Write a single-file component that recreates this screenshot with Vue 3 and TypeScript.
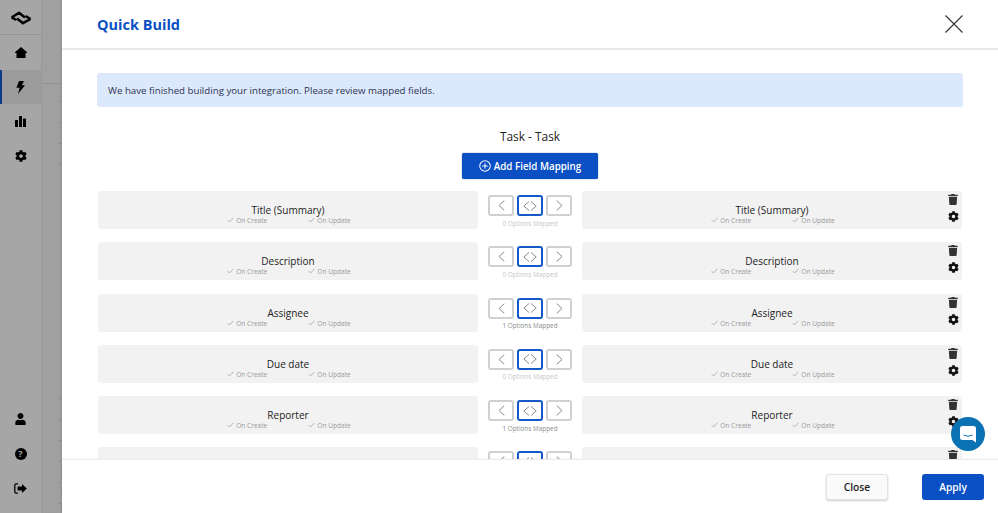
<script setup lang="ts">
const cog = 'M487.4 315.7l-42.6-24.6c4.3-23.2 4.3-47 0-70.2l42.6-24.6c4.9-2.8 7.1-8.6 5.5-14-11.1-35.6-30-67.8-54.7-94.6-3.8-4.1-10-5.1-14.8-2.3L380.8 110c-17.9-15.4-38.5-27.3-60.8-35.1V25.8c0-5.6-3.9-10.5-9.4-11.7-36.7-8.2-74.3-7.8-109.2 0-5.5 1.2-9.4 6.1-9.4 11.7V75c-22.2 7.9-42.8 19.8-60.8 35.1L88.7 85.5c-4.9-2.8-11-1.9-14.8 2.3-24.7 26.7-43.6 58.9-54.7 94.6-1.7 5.4.6 11.2 5.5 14L67.3 221c-4.3 23.2-4.3 47 0 70.2l-42.6 24.6c-4.9 2.8-7.1 8.6-5.5 14 11.1 35.6 30 67.8 54.7 94.6 3.8 4.1 10 5.1 14.8 2.3l42.6-24.6c17.9 15.4 38.5 27.3 60.8 35.1v49.2c0 5.6 3.9 10.5 9.4 11.7 36.7 8.2 74.3 7.8 109.2 0 5.5-1.2 9.4-6.1 9.4-11.7v-49.2c22.2-7.9 42.8-19.8 60.8-35.1l42.6 24.6c4.9 2.8 11 1.9 14.8-2.3 24.7-26.7 43.6-58.9 54.7-94.6 1.5-5.5-.7-11.3-5.6-14.1zM256 336c-44.1 0-80-35.9-80-80s35.9-80 80-80 80 35.9 80 80-35.9 80-80 80z'
const trash = 'M432 32H312l-9.4-18.7A24 24 0 0 0 281.1 0H166.8a23.72 23.72 0 0 0-21.4 13.3L136 32H16A16 16 0 0 0 0 48v32a16 16 0 0 0 16 16h416a16 16 0 0 0 16-16V48a16 16 0 0 0-16-16zM53.2 467a48 48 0 0 0 47.9 45h245.8a48 48 0 0 0 47.9-45L416 128H32z'
const user = 'M224 256c70.7 0 128-57.3 128-128S294.7 0 224 0 96 57.3 96 128s57.3 128 128 128zm89.6 32h-16.7c-22.2 10.2-46.9 16-72.9 16s-50.6-5.8-72.9-16h-16.7C60.2 288 0 348.2 0 422.4V464c0 26.5 21.5 48 48 48h352c26.5 0 48-21.5 48-48v-41.6c0-74.2-60.2-134.4-134.4-134.4z'
const rows = [
  { name: 'Title (Summary)', mapped: 0 },
  { name: 'Description', mapped: 0 },
  { name: 'Assignee', mapped: 1 },
  { name: 'Due date', mapped: 0 },
  { name: 'Reporter', mapped: 1 },
  { name: '', mapped: 0 },
]
const dots = [101, 122, 143, 164, 398, 419, 440, 461, 482, 503]
</script>

<template>
  <div class="page">
    <aside class="rail">
      <div class="logo">
        <svg width="22" height="14" viewBox="0 0 22 14"><path d="M1.500 6.500 9 1.800 15 6.500M7 7.500 13 12.200 20.500 8M1.500 6.500 6.500 9M20.500 8 15.500 5" fill="none" stroke="#000" stroke-width="2.500" stroke-linejoin="round"/></svg>
      </div>
      <div class="nav-item">
        <svg width="12" height="11" viewBox="0 0 12 11"><path d="M6 0 12 5.200V6H10.500V11H1.500V6H0V5.200Z"/></svg>
      </div>
      <div class="nav-item active">
        <svg width="9" height="13" viewBox="0 0 9 13"><path d="M3 0H8L5.800 4.200H9L2 13 3.600 6.800H.4Z"/></svg>
      </div>
      <div class="nav-item">
        <svg width="11" height="11" viewBox="0 0 11 11"><rect y="4" width="3" height="7" rx=".6"/><rect x="4" width="3" height="11" rx=".6"/><rect x="8" y="2.500" width="3" height="8.500" rx=".6"/></svg>
      </div>
      <div class="nav-item">
        <svg width="12" height="12" viewBox="0 0 512 512"><path :d="cog"/></svg>
      </div>
      <div class="rail-spacer"></div>
      <div class="nav-item low">
        <svg width="11" height="12" viewBox="0 0 448 512"><path :d="user"/></svg>
      </div>
      <div class="nav-item low">
        <span class="help">?</span>
      </div>
      <div class="nav-item low">
        <svg width="13" height="11" viewBox="0 0 13 11"><path d="M4 .8H2.200C1.300.8.800 1.300.800 2.200V8.800C.800 9.700 1.300 10.200 2.200 10.200H4" fill="none" stroke="#000" stroke-width="1.300"/><path d="M8 1 12.800 5.500 8 10V7.500H3.600V3.500H8Z"/></svg>
      </div>
    </aside>

    <div class="strip">
      <i class="strip-line"></i>
      <i v-for="d in dots" :key="d" class="strip-dot" :style="{ top: d + 'px' }"></i>
    </div>

    <main class="modal">
      <header class="head">
        <h1>Quick Build</h1>
        <svg class="close-x" width="18" height="18" viewBox="0 0 18 18"><path d="M.5.500 17.500 17.500M17.500.500.500 17.500" stroke="#333" stroke-width="1.100" fill="none"/></svg>
      </header>

      <section class="body">
        <div class="alert">We have finished building your integration. Please review mapped fields.</div>
        <h2>Task - Task</h2>
        <div class="add-wrap">
          <button class="add">
            <svg width="12" height="12" viewBox="0 0 13 13"><circle cx="6.500" cy="6.500" r="5.700" fill="none" stroke="#fff" stroke-width="1.100"/><path d="M6.500 3.500v6M3.500 6.500h6" stroke="#fff" stroke-width="1.100"/></svg>
            Add Field Mapping
          </button>
        </div>

        <div class="rows">
          <div v-for="(r, i) in rows" :key="i" class="row">
            <div class="field">
              <template v-if="r.name">
                <div class="field-name">{{ r.name }}</div>
                <div class="field-meta">
                  <span><svg width="7" height="6" viewBox="0 0 7 6"><path d="M.6 3 2.600 5 6.400.8" fill="none" stroke="#b4b4b4" stroke-width="1"/></svg>On Create</span>
                  <span><svg width="7" height="6" viewBox="0 0 7 6"><path d="M.6 3 2.600 5 6.400.8" fill="none" stroke="#b4b4b4" stroke-width="1"/></svg>On Update</span>
                </div>
              </template>
            </div>
            <div class="mid">
              <div class="arrows">
                <button class="arrow"><svg width="7" height="11" viewBox="0 0 7 11"><path d="M6.300.6 1 5.500 6.300 10.400" fill="none" stroke="#8a8a8a" stroke-width="1"/></svg></button>
                <button class="arrow on"><svg width="14" height="10" viewBox="0 0 14 10"><path d="M6 .5 .8 5 6 9.500M8 .5 13.200 5 8 9.500" fill="none" stroke="#8a8a8a" stroke-width="1"/></svg></button>
                <button class="arrow"><svg width="7" height="11" viewBox="0 0 7 11"><path d="M.7.6 6 5.500.7 10.400" fill="none" stroke="#8a8a8a" stroke-width="1"/></svg></button>
              </div>
              <div v-if="r.name" class="mapped" :class="{ faint: r.mapped === 0 }">{{ r.mapped }} Options Mapped</div>
            </div>
            <div class="field right">
              <template v-if="r.name">
                <div class="field-name">{{ r.name }}</div>
                <div class="field-meta">
                  <span><svg width="7" height="6" viewBox="0 0 7 6"><path d="M.6 3 2.600 5 6.400.8" fill="none" stroke="#b4b4b4" stroke-width="1"/></svg>On Create</span>
                  <span><svg width="7" height="6" viewBox="0 0 7 6"><path d="M.6 3 2.600 5 6.400.8" fill="none" stroke="#b4b4b4" stroke-width="1"/></svg>On Update</span>
                </div>
              </template>
              <div class="tools">
                <svg width="10" height="11" viewBox="0 0 448 512" fill="#333"><path :d="trash"/></svg>
                <svg width="11" height="11" viewBox="0 0 512 512" fill="#111"><path :d="cog"/></svg>
              </div>
            </div>
          </div>
        </div>
      </section>

      <footer class="foot">
        <button class="btn ghost">Close</button>
        <button class="btn primary">Apply</button>
      </footer>

      <div class="chat">
        <svg width="16" height="17" viewBox="0 0 16 17"><path d="M2.500 0H13.500A2.500 2.500 0 0 1 16 2.500V16.500L12.500 14H2.500A2.500 2.500 0 0 1 0 11.500V2.500A2.500 2.500 0 0 1 2.500 0Z" fill="#fff"/><path d="M3.500 9Q8 11.500 12.500 9" fill="none" stroke="#0a72b3" stroke-width="1"/></svg>
      </div>
    </main>
  </div>
</template>

<style scoped>
.page {
  display: flex;
  width: 998px;
  height: 513px;
  overflow: hidden;
  font-family: "Open Sans", "Noto Sans", sans-serif;
  background: #fff;
}
.rail {
  width: 42px;
  flex: none;
  display: flex;
  flex-direction: column;
  padding-bottom: 7.500px;
  background: #a6a6a6;
  border-right: 1px solid #999;
  box-sizing: border-box;
}
.logo {
  height: 35px;
  display: flex;
  align-items: center;
  justify-content: center;
  padding-top: 1px;
  border-bottom: 1px solid #969696;
  box-sizing: border-box;
}
.nav-item {
  height: 34.700px;
  flex: none;
  display: flex;
  align-items: center;
  justify-content: center;
}
.nav-item.active {
  background: #9b9b9b;
  box-shadow: inset 2px 0 0 #0c3a8a;
}
.nav-item.low {
  height: 34.600px;
}
.rail-spacer {
  flex: 1;
}
.help {
  width: 12px;
  height: 12px;
  border-radius: 50%;
  background: #000;
  color: #a6a6a6;
  font-size: 9px;
  font-weight: 700;
  line-height: 12px;
  text-align: center;
}
.strip {
  position: relative;
  width: 20px;
  flex: none;
  background: #a0a0a0;
  box-shadow: inset -2px 0 2px -1px #8c8c8c;
}
.strip-line {
  position: absolute;
  left: 0;
  right: 0;
  top: 83px;
  height: 1px;
  background: #929292;
}
.strip-dot {
  position: absolute;
  left: 17px;
  width: 1px;
  height: 1px;
  background: #777;
}
.modal {
  position: relative;
  flex: 1;
  min-width: 0;
  display: flex;
  flex-direction: column;
  background: #fff;
}
.head {
  height: 50px;
  flex: none;
  box-sizing: border-box;
  display: flex;
  align-items: center;
  justify-content: space-between;
  padding: 0 35px;
  border-bottom: 2px solid #e8e8e8;
}
h1 {
  margin: 0;
  font-size: 14.500px;
  font-weight: 700;
  color: #0a4fc4;
}
.body {
  flex: 1;
  min-height: 0;
  overflow: hidden;
  padding: 23px 35px 0;
}
.alert {
  height: 34px;
  box-sizing: border-box;
  padding-left: 11px;
  display: flex;
  align-items: center;
  background: #dce9fd;
  border-radius: 3px;
  font-size: 9.700px;
  color: #2c3350;
}
h2 {
  margin: 20px 0 0;
  height: 18px;
  line-height: 18px;
  text-align: center;
  font-size: 11.900px;
  font-weight: 400;
  color: #222;
}
.add-wrap {
  margin-top: 8px;
  display: flex;
  justify-content: center;
}
.add {
  width: 136px;
  height: 26px;
  display: flex;
  align-items: center;
  justify-content: center;
  gap: 3px;
  border: 0;
  border-radius: 2px;
  background: #0a4fc4;
  color: #fff;
  font: 600 9.800px "Open Sans", sans-serif;
  box-shadow: 0 0 1px #06317c;
}
.rows {
  margin: 12px 0 0 1px;
  display: flex;
  flex-direction: column;
  gap: 13.300px;
}
.row {
  display: flex;
  height: 38px;
  flex: none;
}
.field {
  position: relative;
  width: 380px;
  flex: none;
  box-sizing: border-box;
  padding-top: 12px;
  background: #f2f2f2;
  border-radius: 3px;
  text-align: center;
}
.field-name {
  height: 14px;
  font-size: 10px;
  line-height: 14px;
  font-weight: 500;
  color: #222;
}
.field-meta {
  display: flex;
  justify-content: center;
  gap: 41px;
  margin: -1px 0 0 2px;
  font-size: 6.600px;
  line-height: 9px;
  font-weight: 500;
  color: #9a9a9a;
}
.field-meta svg {
  margin-right: 2px;
}
.mid {
  width: 104px;
  flex: none;
  padding-top: 4px;
  box-sizing: border-box;
}
.arrows {
  display: flex;
  justify-content: center;
  gap: 3px;
}
.arrow {
  width: 26px;
  height: 21px;
  padding: 0;
  display: flex;
  align-items: center;
  justify-content: center;
  box-sizing: border-box;
  background: #fff;
  border: 2px solid #d0d0d0;
  border-radius: 3px;
}
.arrow.on {
  border-color: #1558c8;
}
.mapped {
  margin-top: 3.500px;
  text-align: center;
  font-size: 6.400px;
  line-height: 8px;
  color: #8c8c8c;
}
.mapped.faint {
  color: #c8c8c8;
}
.tools {
  position: absolute;
  right: 3px;
  top: 3px;
  width: 12px;
  display: flex;
  flex-direction: column;
  align-items: center;
  gap: 6px;
}
.foot {
  height: 54px;
  flex: none;
  box-sizing: border-box;
  display: flex;
  align-items: center;
  justify-content: flex-end;
  gap: 34px;
  padding: 0 14px 0 0;
  border-top: 1px solid #ececec;
  box-shadow: 0 -1px 2px rgba(0, 0, 0, 0.04);
  background: #fff;
}
.btn {
  width: 62px;
  height: 26px;
  border-radius: 3px;
  font: 600 10.200px "Open Sans", sans-serif;
}
.ghost {
  background: #fafafa;
  color: #222;
  border: 1px solid #e4e4e4;
  box-shadow: 0 1px 2px rgba(0, 0, 0, 0.2);
}
.primary {
  background: #0a4fc4;
  color: #fff;
  border: 0;
}
.chat {
  position: absolute;
  left: 889px;
  top: 417px;
  width: 34px;
  height: 34px;
  border-radius: 50%;
  background: #0a72b3;
  display: flex;
  align-items: center;
  justify-content: center;
}
</style>
